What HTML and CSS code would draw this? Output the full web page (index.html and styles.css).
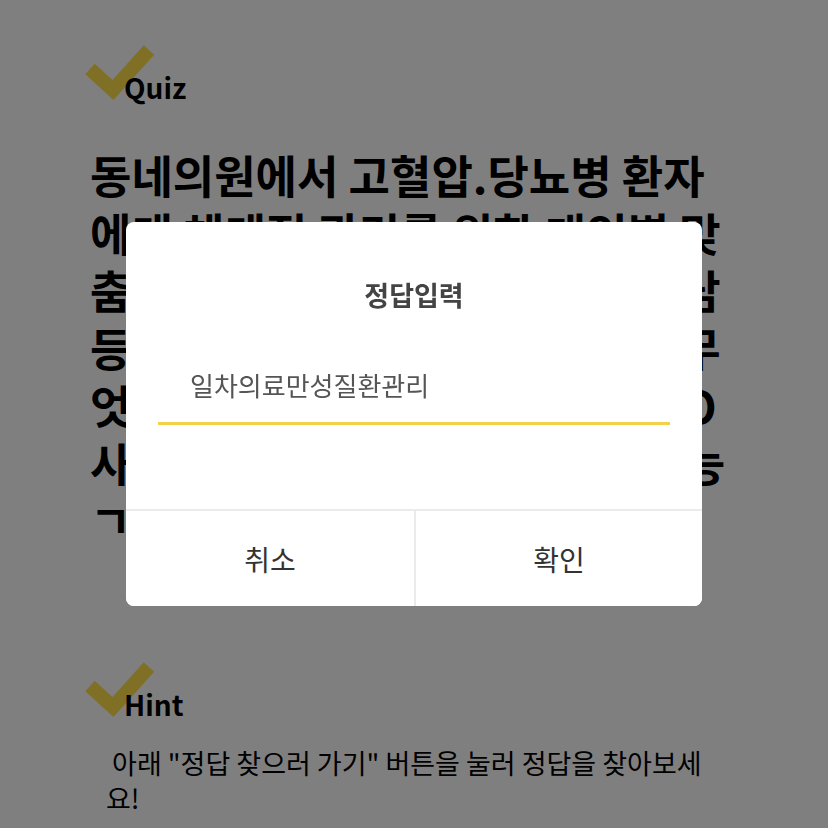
FILE: index.html
```html
<!DOCTYPE html>
<html>
<head>
    <title>Quiz</title>
    <link rel="stylesheet" href="styles.css">
</head>
<body>
    <div class="page">
        <div class="section-title quiz-title">
            <svg class="check" width="80" height="64" viewBox="0 0 80 64">
                <polyline points="5,24 28,45 64,5" />
            </svg>
            <span>Quiz</span>
        </div>
        <p class="question">
            동네의원에서 고혈압.당뇨병 환자<br>
            에게 체계적 관리를 위한 개인별 맞<br>
            춤형 케어플랜 수립 및 교육과 상담<br>
            등을 함께 제공하는 사업 이름은 무<br>
            엇일까요? 띄어쓰기없이 입력시 O<br>
            사업명을 입력하면, 정답 확인 가능<br>
            ㄱ
        </p>

        <div class="section-title hint-title">
            <svg class="check" width="80" height="64" viewBox="0 0 80 64">
                <polyline points="5,24 28,45 64,5" />
            </svg>
            <span>Hint</span>
        </div>
        <p class="hint">&nbsp;아래 "정답 찾으러 가기" 버튼을 눌러 정답을 찾아보세<br>요!</p>
    </div>

    <div class="dim">
        <div class="dialog">
            <div class="dialog-title">정답입력</div>
            <div class="answer-field">
                <input type="text" class="answer" value="일차의료만성질환관리">
            </div>
            <div class="dialog-buttons">
                <button class="btn">취소</button>
                <button class="btn">확인</button>
            </div>
        </div>
    </div>
</body>
</html>
```

FILE: styles.css
```css
body {
    margin: 0;
    background-color: #ffffff;
    font-family: "Noto Sans CJK KR", "Noto Sans", sans-serif;
    color: #000;
}
.page {
    padding-top: 67px;
}
.section-title {
    position: relative;
    margin-left: 85px;
    padding-left: 39px;
    font-size: 28px;
    font-weight: bold;
    line-height: 40px;
}
.section-title .check {
    position: absolute;
    left: 0;
    top: -22px;
}
.check polyline {
    fill: none;
    stroke: #ffe04c;
    stroke-width: 14;
}
.section-title span {
    position: relative;
}
.question {
    margin: 39px 0 0 90px;
    font-size: 45px;
    font-weight: bold;
    line-height: 57.5px;
    white-space: nowrap;
}
.hint-title {
    margin-top: 135px;
}
.hint {
    margin: 21px 0 0 106px;
    font-size: 27px;
    line-height: 35px;
}

/* dialog */
.dim {
    position: fixed;
    top: 0;
    left: 0;
    right: 0;
    bottom: 0;
    background-color: rgba(0, 0, 0, 0.5);
    display: flex;
    align-items: center;
    justify-content: center;
}
.dialog {
    width: 576px;
    height: 384px;
    background-color: #fff;
    border-radius: 8px;
    display: flex;
    flex-direction: column;
    overflow: hidden;
}
.dialog-title {
    padding-top: 55px;
    text-align: center;
    font-size: 27px;
    font-weight: bold;
    line-height: 36px;
    color: #444;
}
.answer-field {
    margin: 42px 32px 0 32px;
    border-bottom: 3px solid #f2d14b;
}
.answer {
    display: block;
    width: 100%;
    box-sizing: border-box;
    border: none;
    outline: none;
    padding: 12px 0 19px 32px;
    font-family: "Noto Sans CJK KR", sans-serif;
    font-size: 26px;
    line-height: 36px;
    color: #555;
    background: transparent;
}
.dialog-buttons {
    margin-top: auto;
    display: grid;
    grid-template-columns: 1fr 1fr;
    border-top: 2px solid #ebebeb;
    height: 95px;
}
.btn {
    border: none;
    background: #fff;
    font-family: "Noto Sans CJK KR", sans-serif;
    font-size: 28px;
    color: #333;
}
.btn + .btn {
    border-left: 2px solid #ebebeb;
}
```
